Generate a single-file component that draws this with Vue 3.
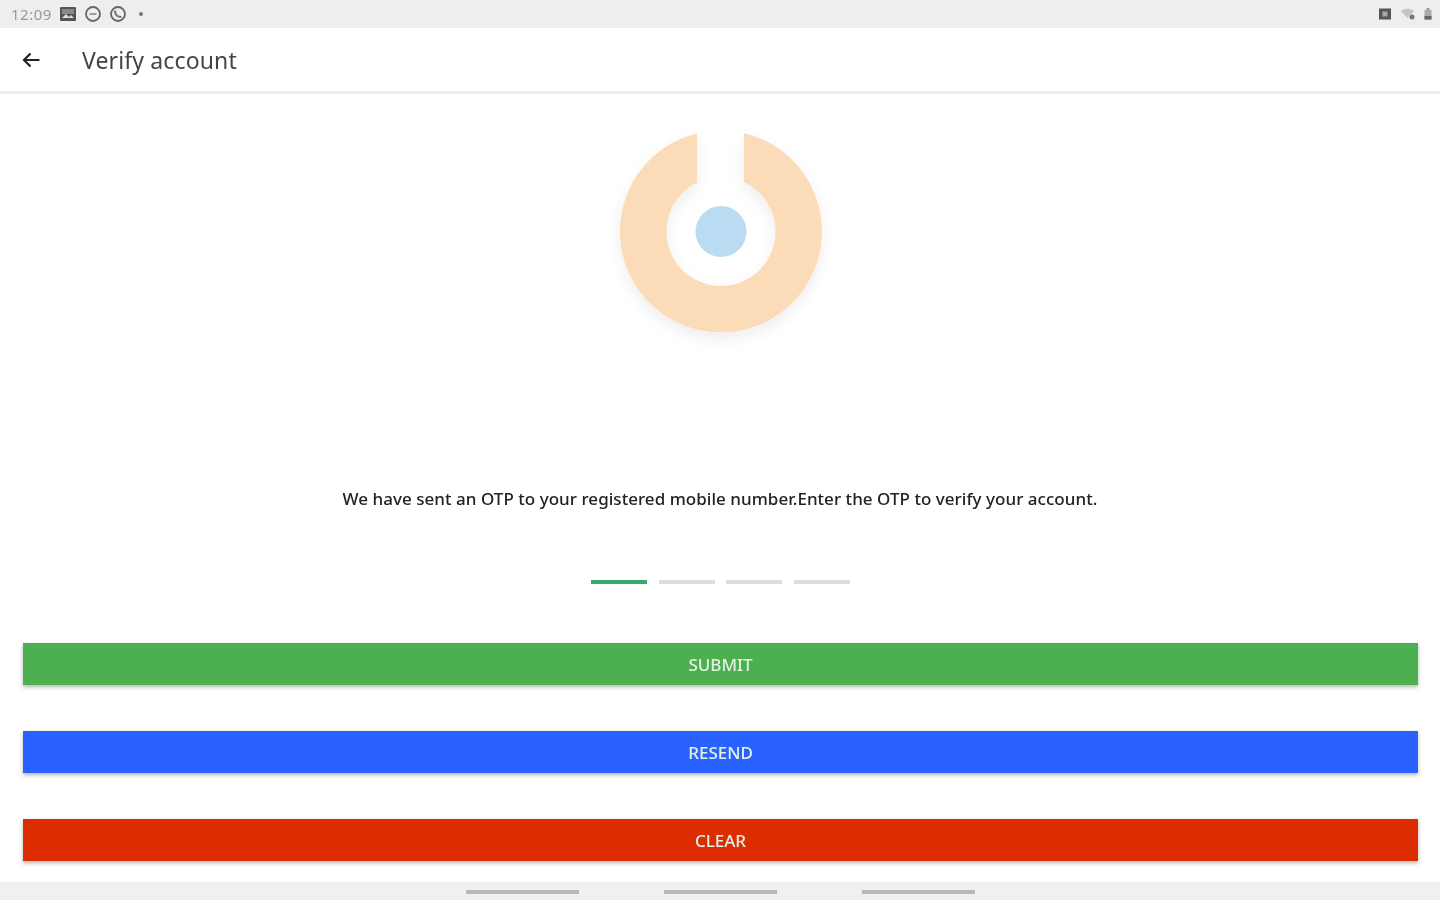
<script setup>
const buttons = [
  { label: 'SUBMIT', cls: 'green' },
  { label: 'RESEND', cls: 'blue' },
  { label: 'CLEAR', cls: 'red' }
]
const dashes = [true, false, false, false]
</script>

<template>
  <div class="screen">
    <header class="status">
      <div class="status-left">
        <span class="time">12:09</span>
        <svg class="si" width="18" height="16" viewBox="0 0 18 16"><rect x="1" y="1" width="16" height="14" rx="1" fill="#555"/><path d="M3 12l4-4 3 3 2-2 3 3z" fill="#ddd"/><rect x="3" y="3" width="12" height="5" fill="#8a8a8a"/></svg>
        <svg class="si" width="18" height="18" viewBox="0 0 18 18"><circle cx="9" cy="9" r="7" fill="none" stroke="#666" stroke-width="1.8"/><path d="M5.500 9h7" stroke="#888" stroke-width="1.600"/></svg>
        <svg class="si" width="18" height="18" viewBox="0 0 18 18"><circle cx="9" cy="9" r="7" fill="none" stroke="#666" stroke-width="1.8"/><path d="M6 5.500c0 4 2.500 6.500 6.500 6.500" fill="none" stroke="#777" stroke-width="2"/></svg>
        <span class="dot"></span>
      </div>
      <div class="status-right">
        <svg width="14" height="14" viewBox="0 0 14 14"><rect x="1" y="1.500" width="12" height="11" fill="#555"/><rect x="4.500" y="4.500" width="5" height="5" fill="#aaa"/></svg>
        <svg width="16" height="14" viewBox="0 0 16 14"><path d="M1 4c4-3 9-3 13 0l-6.500 7z" fill="#c4c4c4"/><circle cx="12" cy="10" r="2.500" fill="#777"/></svg>
        <svg width="10" height="14" viewBox="0 0 10 14"><rect x="3.500" y="1" width="3" height="2" fill="#999"/><rect x="1.500" y="3" width="7" height="9.500" fill="#aaa"/><rect x="1.500" y="9" width="7" height="3.500" fill="#666"/></svg>
      </div>
    </header>

    <nav class="appbar">
      <svg class="back" width="22" height="22" viewBox="0 0 22 22"><path d="M19.500 11H4M10.500 4.500L4 11l6.500 6.500" fill="none" stroke="#222" stroke-width="2.200"/></svg>
      <h1 class="title">Verify account</h1>
    </nav>

    <main class="content">
      <svg class="logo" width="240" height="240" viewBox="0 0 240 240">
        <defs>
          <filter id="soft" x="-20%" y="-20%" width="140%" height="150%">
            <feDropShadow dx="0" dy="6" stdDeviation="7" flood-color="#000" flood-opacity="0.07"/>
          </filter>
        </defs>
        <path filter="url(#soft)" fill="#fcdcb8" fill-rule="evenodd"
          d="M97 14.400A101 101 0 1 0 144 14.200V63.100A54.500 54.500 0 1 1 97 63.600Z"/>
        <circle cx="121" cy="112.500" r="25.500" fill="#b9dcf2"/>
      </svg>

      <p class="message">We have sent an OTP to your registered mobile number.Enter the OTP to verify your account.</p>

      <div class="otp">
        <span v-for="(on, i) in dashes" :key="i" class="dash" :class="{ on }"></span>
      </div>

      <div class="actions">
        <button v-for="b in buttons" :key="b.label" class="btn" :class="b.cls"><span class="btn-label">{{ b.label }}</span></button>
      </div>
    </main>

    <footer class="navbar">
      <span class="pill"></span>
      <span class="pill"></span>
      <span class="pill"></span>
    </footer>
  </div>
</template>

<style scoped>
.screen {
  width: 1440px;
  height: 900px;
  display: flex;
  flex-direction: column;
  background: #fff;
  font-family: "Noto Sans", "Open Sans", sans-serif;
  overflow: hidden;
}
.status {
  height: 28px;
  flex: none;
  background: #eeeeee;
  display: flex;
  align-items: center;
  justify-content: space-between;
  padding: 0 7px 0 11px;
  box-sizing: border-box;
}
.status-left, .status-right {
  display: flex;
  align-items: center;
}
.status-left { gap: 7px; }
.status-right { gap: 7.5px; }
.status svg { filter: blur(0.7px); }
.time {
  width: 41px;
  font-size: 15px;
  letter-spacing: 0.5px;
  color: #999;
  white-space: nowrap;
  filter: blur(0.7px);
}
.dot {
  width: 4px;
  height: 4px;
  border-radius: 50%;
  background: #777;
  margin-left: 5px;
  filter: blur(0.5px);
}
.appbar {
  height: 66px;
  flex: none;
  box-sizing: border-box;
  border-bottom: 3px solid #eeeeee;
  display: flex;
  align-items: center;
  padding-left: 20px;
}
.back { filter: blur(0.5px); }
.title {
  margin: 0 0 0 40px;
  font-size: 23px;
  font-weight: 400;
  color: #444;
  letter-spacing: 0.13px;
  filter: blur(0.7px);
}
.content {
  flex: 1;
  display: flex;
  flex-direction: column;
  align-items: center;
}
.logo {
  flex: none;
  margin-top: 25px;
  filter: blur(0.5px);
}
.message {
  margin: 127px 0 0;
  height: 26px;
  line-height: 26px;
  font-size: 17px;
  font-weight: 500;
  letter-spacing: 0.035px;
  color: #222;
  white-space: nowrap;
  filter: blur(0.7px);
}
.otp {
  display: flex;
  gap: 11.67px;
  margin: 68px 0 0 1px;
}
.dash {
  width: 56px;
  height: 4px;
  background: #dcdcdc;
  filter: blur(0.5px);
}
.dash.on { background: #3aa76d; }
.actions {
  align-self: stretch;
  display: flex;
  flex-direction: column;
  gap: 46px;
  margin: 59px 22px 0 23px;
}
.btn {
  height: 42px;
  border: 0;
  padding: 0;
  color: #e4f2e4;
  font: 500 17px "Noto Sans", "Open Sans", sans-serif;
  box-shadow: 0 2px 4px rgba(0, 0, 0, 0.3);
}
.btn-label {
  display: inline-block;
  filter: blur(0.6px);
}
.green { background: #4caf50; }
.blue { background: #2962ff; }
.red { background: #dd2c00; }
.navbar {
  height: 18px;
  flex: none;
  background: #f0f0f0;
  display: flex;
  justify-content: center;
  gap: 85px;
  padding-top: 8px;
  box-sizing: border-box;
}
.pill {
  width: 113px;
  height: 4px;
  background: #b8b8b8;
  filter: blur(0.5px);
}
</style>

<style>
body { margin: 0; }
</style>
